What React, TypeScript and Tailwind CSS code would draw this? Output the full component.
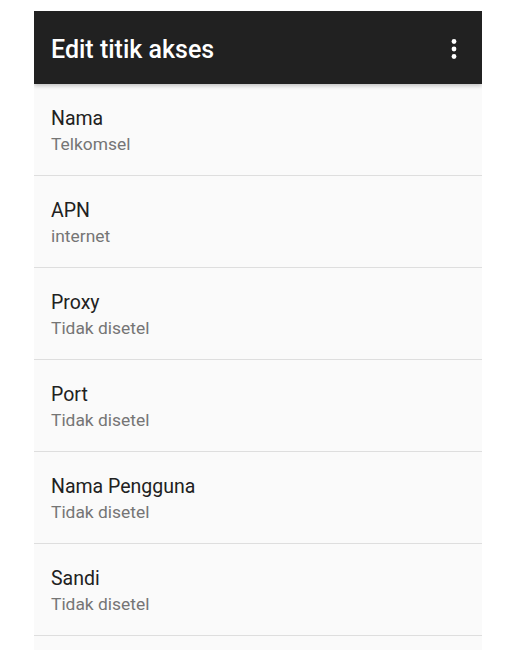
const rows = [
  { title: 'Nama', value: 'Telkomsel' },
  { title: 'APN', value: 'internet' },
  { title: 'Proxy', value: 'Tidak disetel' },
  { title: 'Port', value: 'Tidak disetel' },
  { title: 'Nama Pengguna', value: 'Tidak disetel' },
  { title: 'Sandi', value: 'Tidak disetel' },
]

function MoreIcon() {
  return (
    <svg width="8" height="22" viewBox="0 0 8 22" fill="#ffffff">
      <circle cx="4" cy="3.5" r="2.4" />
      <circle cx="4" cy="11" r="2.4" />
      <circle cx="4" cy="18.5" r="2.4" />
    </svg>
  )
}

export default function App() {
  return (
    <div className="min-h-[672px] bg-white pt-[11px] pl-[34px]" style={{ fontFamily: 'Roboto, "Noto Sans", sans-serif' }}>
      <div className="w-[448px] h-[639px] bg-[#fafafa] flex flex-col overflow-hidden">
        <header className="relative z-10 h-[73px] shrink-0 bg-[#212121] flex items-start justify-between pl-[17px] pr-[24px] shadow-[0_2px_4px_rgba(0,0,0,0.22)]">
          <h1 className="pt-[24px] text-[25px] leading-[29px] font-medium text-white">Edit titik akses</h1>
          <div className="pt-[27px]">
            <MoreIcon />
          </div>
        </header>
        <ul className="flex flex-col">
          {rows.map((r) => (
            <li key={r.title} className="pl-[17px] pt-[23px] pb-[21px] border-b border-[#dedede]">
              <p className="text-[19.5px] leading-[24px] text-[#212121]">{r.title}</p>
              <p className="mt-[3px] text-[17.4px] leading-[20px] text-[#757575]">{r.value}</p>
            </li>
          ))}
        </ul>
      </div>
    </div>
  )
}
